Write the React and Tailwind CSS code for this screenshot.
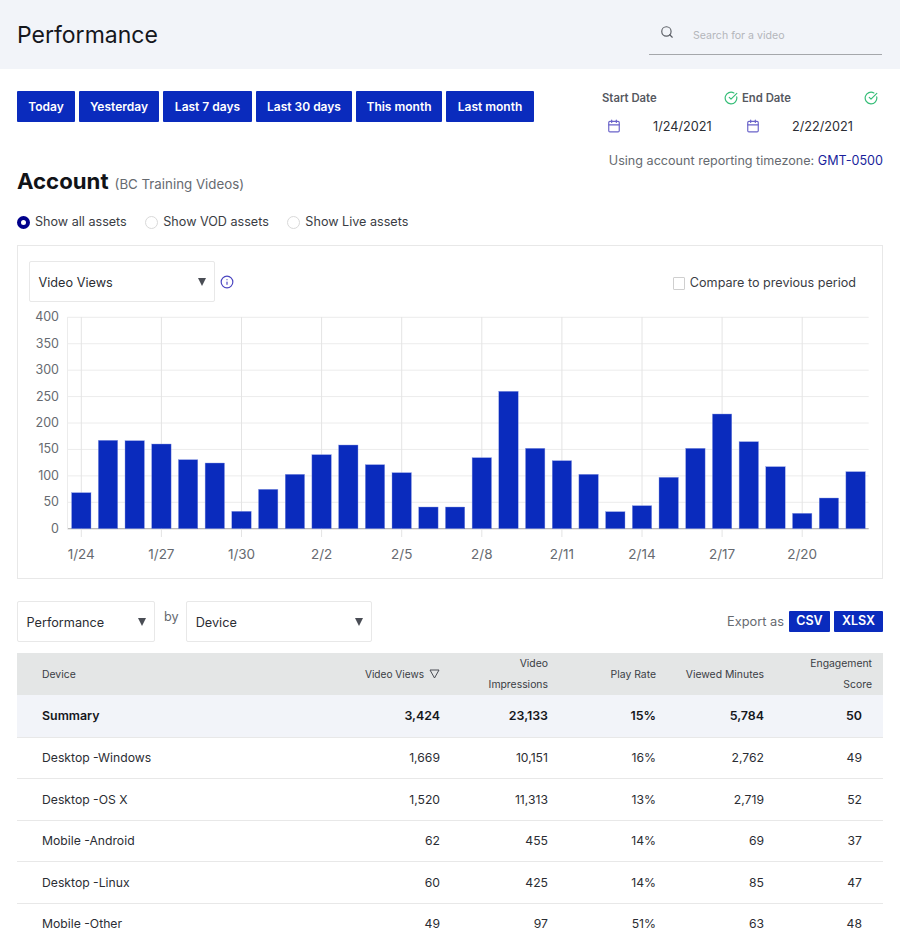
import { Calendar, CircleCheckBig, Info, Search } from "lucide-react";

const ranges = [
  { label: "Today", width: "w-[58px]" },
  { label: "Yesterday", width: "w-[80px]" },
  { label: "Last 7 days", width: "w-[89px]" },
  { label: "Last 30 days", width: "w-[96px]" },
  { label: "This month", width: "w-[86px]" },
  { label: "Last month", width: "w-[88px]" },
];

const assets = ["Show all assets", "Show VOD assets", "Show Live assets"];

// bar tops in chart pixels, one per day from 1/24 to 2/22
const barTops = [
  492.7, 440.3, 440.7, 444, 459.7, 463, 511.3, 489.3, 474.3, 454.7, 445, 464.7, 472.7, 507, 507,
  457.7, 391.3, 448.3, 460.7, 474.3, 511.7, 505.7, 477.3, 448.3, 414, 441.7, 466.7, 513.3, 498, 471.7,
];

const xLabels = ["1/24", "1/27", "1/30", "2/2", "2/5", "2/8", "2/11", "2/14", "2/17", "2/20"];
const yLabels = [400, 350, 300, 250, 200, 150, 100, 50, 0];

const rows = [
  ["Desktop -Windows", "1,669", "10,151", "16%", "2,762", "49"],
  ["Desktop -OS X", "1,520", "11,313", "13%", "2,719", "52"],
  ["Mobile -Android", "62", "455", "14%", "69", "37"],
  ["Desktop -Linux", "60", "425", "14%", "85", "47"],
  ["Mobile -Other", "49", "97", "51%", "63", "48"],
];

const columns = "grid grid-cols-[323px_100px_108px_108px_108px_119px] items-center";

const Select = ({ label, className }) => (
  <div className={`flex h-[41px] items-center justify-between rounded-[2px] border border-[#e8e8e8] bg-white pl-[8.5px] pr-[8px] text-[12.7px] text-[#2b2d33] ${className}`}>
    <span className="pt-[2px]">{label}</span>
    <span className="h-0 w-0 border-x-[4px] border-t-[8px] border-x-transparent border-t-[#4a4d55]" />
  </div>
);

const Chart = () => {
  const step = 26.7;
  const center = (i) => 81.3 + i * step;
  return (
    <svg viewBox="18 305 864 273" className="block h-[273px] w-[864px]">
      {yLabels.map((v, i) => (
        <g key={v}>
          <line x1="67.5" x2="868.7" y1={317.3 + i * 26.43} y2={317.3 + i * 26.43} stroke={v === 0 ? "#a3a3a3" : "#ececec"} />
          <text x="59" y={321.3 + i * 26.43} textAnchor="end" fontSize="12.5" fill="#666a70">
            {v}
          </text>
        </g>
      ))}
      <line x1="67.5" x2="67.5" y1="317" y2="529" stroke="#ececec" />
      {xLabels.map((label, i) => (
        <g key={label}>
          <line x1={center(i * 3)} x2={center(i * 3)} y1="317" y2="537" stroke="#e4e4e4" />
          <text x={center(i * 3)} y="559" textAnchor="middle" fontSize="13.5" fill="#666a70">
            {label}
          </text>
        </g>
      ))}
      {barTops.map((top, i) => (
        <rect
          key={i}
          x={center(i) - 9.7}
          y={top}
          width="19.4"
          height={528.7 - top}
          fill="#0a2bbd"
          stroke="#8c9be3"
          strokeWidth="0.4"
        />
      ))}
    </svg>
  );
};

const App = () => {
  return (
    <div className="h-[928px] overflow-hidden bg-white font-['Inter','Liberation_Sans',sans-serif] text-[#2b2d33]">
      <header className="flex h-[69px] items-start justify-between bg-[#f2f4f9] pl-[17px] pr-[18px]">
        <h1 className="mt-[19px] text-[23px] leading-[32px] font-normal text-[#15171c]">Performance</h1>
        <div className="mt-[15px] flex h-[40px] w-[233px] items-start border-b border-[#a5a7ab] pl-[11px] pt-[10px]">
          <Search size={14} className="text-[#5c5f66]" />
          <span className="ml-[19px] mt-[3px] text-[10.6px] text-[#b4b6bb]">Search for a video</span>
        </div>
      </header>

      <main className="px-[17px]">
        <div className="flex items-start justify-between pt-[22px]">
          <div className="flex gap-[4px]">
            {ranges.map((range) => (
              <button
                key={range.label}
                type="button"
                className={`h-[31px] rounded-[1px] bg-[#0a2bbd] text-[12px] font-semibold whitespace-nowrap text-white ${range.width}`}
              >
                {range.label}
              </button>
            ))}
          </div>
          <div className="w-[281px]">
            <div className="flex h-[14px] items-center text-[11.3px] leading-[14px] font-semibold text-[#55585f]">
              <span className="w-[122px]">Start Date</span>
              <CircleCheckBig size={14} className="text-[#35bd77]" />
              <span className="ml-[4px] w-[122px]">End Date</span>
              <CircleCheckBig size={14} className="text-[#35bd77]" />
            </div>
            <div className="mt-[13px] flex h-[16px] items-center text-[12.7px] leading-[16px] text-[#2b2d33]">
              <Calendar size={14} className="ml-[5px] text-[#6a63c9]" />
              <span className="ml-[32px] w-[93px] pt-[2px]">1/24/2021</span>
              <Calendar size={14} className="text-[#6a63c9]" />
              <span className="ml-[32px] pt-[2px]">2/22/2021</span>
            </div>
            <p className="mt-[19px] text-right text-[12.6px] leading-[16px] whitespace-nowrap text-[#666a70]">
              Using account reporting timezone: <span className="text-[#1a1f9c]">GMT-0500</span>
            </p>
          </div>
        </div>

        <div className="mt-[-4px] flex h-[32px] items-baseline gap-[6px]">
          <h2 className="text-[22.2px] leading-[32px] font-bold text-[#111317]">Account</h2>
          <span className="text-[13.3px] leading-[32px] text-[#666a70]">(BC Training Videos)</span>
        </div>

        <div className="mt-[15px] flex h-[20px] items-center">
          {assets.map((asset, i) => (
            <label key={asset} className="mr-[18.5px] flex items-center gap-[5px] text-[12.6px] leading-[20px] text-[#3a3d44]">
              {i === 0 ? (
                <span className="h-[13px] w-[13px] rounded-full border-[4px] border-[#00008b] bg-white" />
              ) : (
                <span className="h-[13px] w-[13px] rounded-full border border-[#d9d9d9] bg-white" />
              )}
              {asset}
            </label>
          ))}
        </div>

        <section className="mt-[13px] h-[334px] w-[866px] border border-[#e8e8e8]">
          <div className="flex h-[59px] items-start justify-between pl-[11px] pr-[26px] pt-[15px]">
            <div className="flex items-center gap-[5px]">
              <Select label="Video Views" className="w-[186px]" />
              <Info size={14} className="text-[#4a45c0]" />
            </div>
            <label className="mt-[12px] flex items-center gap-[5px] text-[12.6px] leading-[20px] text-[#3a3d44]">
              <span className="h-[13px] w-[12px] rounded-[1px] border border-[#cfcfcf] bg-white" />
              Compare to previous period
            </label>
          </div>
          <Chart />
        </section>

        <div className="mt-[22px] flex items-start">
          <Select label="Performance" className="w-[138px]" />
          <span className="ml-[9px] mr-[7.5px] mt-[6px] text-[12.7px] text-[#666a70]">by</span>
          <Select label="Device" className="w-[186px]" />
          <div className="ml-auto mt-[10px] flex items-center">
            <span className="mr-[5px] text-[12.8px] text-[#666a70]">Export as</span>
            <button type="button" className="mr-[4px] h-[21px] w-[41px] rounded-[1px] bg-[#0a2bbd] text-[12.5px] font-semibold text-white">
              CSV
            </button>
            <button type="button" className="h-[21px] w-[49px] rounded-[1px] bg-[#0a2bbd] text-[12.5px] font-semibold text-white">
              XLSX
            </button>
          </div>
        </div>

        <div className="mt-[11px] w-[866px] text-[12.2px] text-[#2b2d33]">
          <div className={`${columns} h-[42px] bg-[#e4e6e6] pb-[1px] text-right text-[10.4px] leading-[21px] text-[#3a3d44]`}>
            <div className="pl-[25px] text-left">Device</div>
            <div className="flex items-center justify-end gap-[5px] text-[10.1px] whitespace-nowrap">
              Video Views
              <svg width="11" height="10" viewBox="0 0 11 10" fill="none" stroke="#4a4d55" strokeWidth="1">
                <path d="M1 1h9L5.5 9z" />
              </svg>
            </div>
            <div>
              Video
              <br />
              Impressions
            </div>
            <div>Play Rate</div>
            <div className="whitespace-nowrap">Viewed Minutes</div>
            <div className="pr-[11px]">
              Engagement
              <br />
              Score
            </div>
          </div>

          <div className={`${columns} h-[42.5px] border-b border-[#e8e8e8] bg-[#f2f4f9] pt-[1px] text-right text-[12.4px] font-semibold text-[#15171c]`}>
            <div className="pl-[25px] text-left">Summary</div>
            <div>3,424</div>
            <div>23,133</div>
            <div>15%</div>
            <div>5,784</div>
            <div className="pr-[21px]">50</div>
          </div>

          {rows.map((row) => (
            <div key={row[0]} className={`${columns} h-[41.5px] border-b border-[#e8e8e8] pt-[1px] text-right`}>
              <div className="pl-[25px] text-left">{row[0]}</div>
              <div>{row[1]}</div>
              <div>{row[2]}</div>
              <div>{row[3]}</div>
              <div>{row[4]}</div>
              <div className="pr-[21px]">{row[5]}</div>
            </div>
          ))}
        </div>
      </main>
    </div>
  );
};

export default App;
